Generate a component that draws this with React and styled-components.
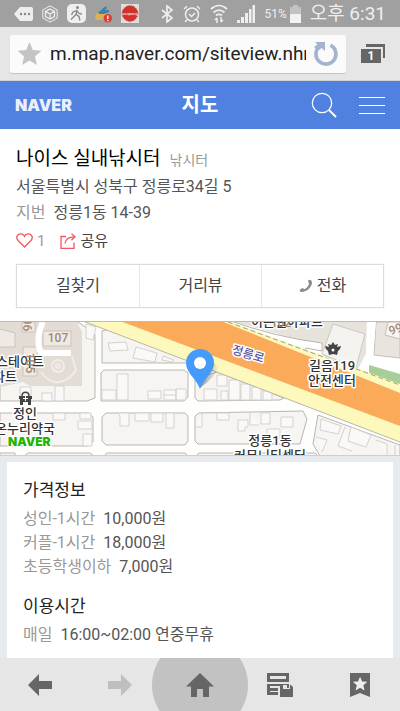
import React from 'react'
import styled, { createGlobalStyle, css } from 'styled-components'

const colors = {
  blue: '#5080e0',
  chrome: '#e6e6e6',
  icon: '#666',
  red: '#f9545f',
  line: '#dcdcdc',
}

const GlobalStyle = createGlobalStyle`
  * {
    box-sizing: border-box;
  }

  body {
    margin: 0;
    font-family: Roboto, 'Noto Sans CJK KR', sans-serif;
    font-size: 16px;
    line-height: 24px;
    color: #555;
    background: #e7ebef;
  }

  button {
    font: inherit;
    color: inherit;
    padding: 0;
    border: 0;
    background: none;
  }

  a {
    color: inherit;
    text-decoration: none;
  }

  svg {
    display: block;
    flex-shrink: 0;
  }
`

const Screen = styled.div`
  display: flex;
  flex-direction: column;
  height: 100vh;
`

const StatusBar = styled.div`
  display: flex;
  flex-shrink: 0;
  align-items: center;
  justify-content: space-between;
  height: 27px;
  padding: 0 14px;
  background: #a0a0a0;
  color: #eee;
`

const StatusGroup = styled.div`
  display: flex;
  align-items: center;
  gap: 9px;
`

const Battery = styled.span`
  display: flex;
  align-items: center;
  gap: 3px;
  font-size: 12px;
`

const Clock = styled.time`
  font-size: 19px;
  white-space: nowrap;
`

const AddressBar = styled.form`
  display: flex;
  flex-shrink: 0;
  align-items: center;
  height: 54px;
  padding: 0 15px 0 10px;
  gap: 15px;
  background: ${colors.chrome};
  border-bottom: 1px solid #d2d2d2;
`

const AddressField = styled.div`
  display: flex;
  flex: 1;
  min-width: 0;
  align-items: center;
  height: 38px;
  padding: 0 7px;
  background: #fbfbfb;
  border-radius: 2px;
  box-shadow: 0 1px 1px #c4c4c4;
`

const AddressInput = styled.input`
  flex: 1;
  min-width: 0;
  height: 32px;
  margin: 0 7px 0 8px;
  padding: 0;
  border: 0;
  outline: 0;
  background: none;
  color: #222;
  font: 19px Roboto, sans-serif;
`

const Content = styled.main`
  display: flex;
  flex: 1;
  flex-direction: column;
  min-height: 0;
  overflow-y: auto;
  scrollbar-width: none;
`

const Header = styled.header`
  display: grid;
  grid-template-columns: 1fr auto 1fr;
  flex-shrink: 0;
  align-items: center;
  height: 48px;
  padding: 0 15px;
  background: ${colors.blue};
  color: #fff;
`

const Logo = styled.a`
  font-family: Inter, sans-serif;
  font-size: 16px;
  font-weight: 900;
  color: #eaf0ff;
`

const HeaderTitle = styled.h1`
  margin: 0;
  font-size: 20px;
  font-weight: 700;
`

const HeaderActions = styled.div`
  display: flex;
  align-items: center;
  justify-content: flex-end;
  gap: 22px;
`

const Place = styled.section`
  flex-shrink: 0;
  padding: 18px 16px 13px;
  background: #fff;
`

const PlaceName = styled.h2`
  display: flex;
  align-items: baseline;
  gap: 9px;
  margin: 0 0 2px;
  font-size: 19px;
  font-weight: 400;
  color: #000;

  small {
    font-size: 14px;
    color: #999;
  }
`

const Line = styled.p`
  margin: 0;
  line-height: 26px;
`

const Muted = styled.span`
  margin-right: 8px;
  color: #999;
`

const Social = styled.div`
  display: flex;
  align-items: center;
  gap: 15px;
  height: 29px;
  margin-bottom: 9px;
`

const SocialButton = styled.button`
  display: flex;
  align-items: center;
  gap: 4px;
  font-size: 15px;
  color: ${props => (props.$muted ? '#999' : '#444')};
`

const Actions = styled.div`
  display: grid;
  grid-template-columns: repeat(3, 1fr);
  height: 44px;
  border: 1px solid ${colors.line};
  box-shadow: 0 0 1px ${colors.line};
`

const Action = styled.button`
  display: flex;
  align-items: center;
  justify-content: center;
  gap: 4px;
  color: #444;

  & + & {
    border-left: 1px solid #e6e6e6;
  }
`

const MapFrame = styled.section`
  flex-shrink: 0;
  height: 134px;
  border-top: 1px solid #bbb;
  background: #fff;

  svg {
    width: 100%;
    height: 100%;
  }
`

const Details = styled.div`
  display: flex;
  flex: 1 0 auto;
  padding: 6px 7px 0;
  border-top: 1px solid #ccd0d4;
  background: #e7ebef;
`

const Card = styled.div`
  flex: 1;
  padding: 16px 16px 10px;
  background: #fff;
`

const Group = styled.section`
  & + & {
    margin-top: 15px;
  }
`

const GroupTitle = styled.h3`
  margin: 0 0 5px;
  font-size: 17px;
  font-weight: 400;
  color: #222;
`

const Row = styled.p`
  margin: 0;
`

const BottomBar = styled.nav`
  display: grid;
  grid-template-columns: repeat(5, minmax(0, 1fr));
  grid-template-rows: 53px;
  flex-shrink: 0;
  height: 53px;
  overflow: hidden;
  background: ${colors.chrome};
`

const BottomButton = styled.button`
  display: flex;
  align-items: center;
  justify-content: center;
  color: ${props => (props.disabled ? '#bfbfbf' : colors.icon)};

  ${props =>
    props.$active &&
    css`
      height: 96px;
      width: 96px;
      align-self: center;
      justify-self: center;
      border-radius: 50%;
      background: #c2c2c2;
    `}
`

const STAR = '12,1 15.2,8.6 23.5,9.3 17.2,14.8 19.1,23 12,18.6 4.9,23 6.8,14.8 .5,9.3 8.8,8.6'

const StatusIcons = () => (
  <StatusGroup>
    <svg width="19" height="16" viewBox="0 0 19 16">
      <path d="M0 8 6 1h11a2 2 0 0 1 2 2v10a2 2 0 0 1-2 2H6z" fill="#eee" />
      <g fill="#888">
        <circle cx="7" cy="8" r="1.2" />
        <circle cx="11" cy="8" r="1.2" />
        <circle cx="15" cy="8" r="1.2" />
      </g>
    </svg>
    <svg width="16" height="18" viewBox="0 0 16 18" fill="none" stroke="#eee">
      <path d="m8 .8 7.2 4.1v8.2L8 17.2.8 13.1V4.9z" />
      <path d="m8 4 4.5 2.4v5.2L8 14l-4.5-2.4V6.4zM3.5 6.4 8 9l4.5-2.6M8 9v5" strokeWidth="1.3" />
    </svg>
    <svg width="19" height="19" viewBox="0 0 19 19">
      <rect width="19" height="19" rx="5" fill="#eee" />
      <circle cx="10.5" cy="3.600" r="1.500" fill="#888" />
      <path d="M10 6 9 10.500 6.500 13 4 15.500M9 10.500l3 2 1 4M9.500 6.500 6 8l-1.500 3M10 7l2 2.500 3 .5" fill="none" stroke="#888" strokeWidth="1.300" />
    </svg>
    <svg width="17" height="18" viewBox="0 0 17 18">
      <path d="M1 9c3-2 8-2 12 0l1 6H0z" fill="#dcb056" />
      <path d="M3 7c2-1 3-1 4-3l4-3 1 2-2 2h4v2l-5 2H4z" fill="#3c82ac" />
      <circle cx="12.8" cy="13.3" r="4.2" fill="#de3d33" />
      <path d="M12.8 10.5v3.4M12.8 15v1.2" stroke="#fff" strokeWidth="1.3" />
    </svg>
    <svg width="18" height="19" viewBox="0 0 18 19">
      <path d="M0 0h18v19H0z" fill="#ddd" />
      <circle cx="9" cy="9.5" r="7.8" fill="#d0322c" stroke="#d0322c" strokeDasharray="1.5 1" />
      <text x="9" y="11" fontSize="4" fill="#fff" textAnchor="middle">coupang</text>
    </svg>
  </StatusGroup>
)

const SystemIcons = () => (
  <StatusGroup>
    <svg width="13" height="18" viewBox="0 0 13 18" fill="none" stroke="#eee" strokeWidth="1.7">
      <path d="m1 5 10 8-5 4V1l5 4L1 13" />
    </svg>
    <svg width="18" height="18" viewBox="0 0 18 18" fill="none" stroke="#eee" strokeWidth="1.5">
      <circle cx="9" cy="9.5" r="6.5" />
      <path d="m6 9 2.5 2.5L12 8M1 4l3-2.7M17 4l-3-2.7M4 15l-2 2M14 15l2 2" />
    </svg>
    <svg width="18" height="20" viewBox="0 0 18 20" fill="none" stroke="#eee" strokeWidth="1.8">
      <path d="M1 5c5-4.500 11-4.500 16 0M3.500 8.500c3.500-3 7.500-3 11 0M6 11.500c2-1.500 4-1.500 6 0" />
      <path d="M7 19v-5m-2 2 2-2M11 13v5m2-2-2 2" strokeWidth="1.5" />
    </svg>
    <svg width="18" height="18" viewBox="0 0 18 18" fill="#eee">
      <path d="M0 15h3v3H0zM4 12h3v6H4zM8 8h3v10H8zM12 4h2.500v14H12zM15.500 0H18v18h-2.500z" />
    </svg>
    <Battery>
      51%
      <svg width="11" height="18" viewBox="0 0 11 18">
        <path d="M3 0h5v2h3v7H0V2h3z" fill="#c2c2c2" />
        <path d="M0 9h11v9H0z" fill="#f2f2f2" />
      </svg>
    </Battery>
    <Clock>오후 6:31</Clock>
  </StatusGroup>
)

const plots = [
  // apartment side
  'M0 0H78L95 12V76L87 79H0Z',
  'M102 9 110 7 190 36V41H102Z',
  'M101 51 104 48H184L188 51V75L184 79H101Z',
  'M0 91H88L93 95V120L88 124H0Z',
  'M102 95 106 91H185L188 94V119L185 123H106L102 119Z',
  'M195 57 217 50 284 76 280 78 198 79 195 76Z',
  'M195 94 199 91 303 89 307 97 300 122H198L195 119Z',
  'M318 93 400 123V134H320L313 122Z',
  'M0 131H15V138H0ZM24 134 28 131H90L94 134ZM104 134 107 131H185L188 134ZM196 134 199 131H315L318 134Z',
]

const houses = [
  'M108 21 126 20 128 28 110 29ZM136 25 157 31 155 40 133 36ZM163 34 174 38 172 40 162 38Z',
  'M117 52h11v26h-11zM102 68h14v10h-14zM148 69h13v8h-13zM164 68h12v10h-12zM176 67h10v11h-10zM164 73h12',
  'M42 71h10v8H42zM55 64h9v15h-9zM20 65h11v14H20zM86 2 96 5 93 18 86 16z',
  'M118 91h11v13h-9v-10zM135 91h14v8h-14zM151 91h12v9h-12zM166 91h8v15h-8zM53 91h12v7H53zM78 99h14v8H78zM83 112h9v12h-9zM80 91h11v6H80z',
  'M204 67h13v11h-13zM221 69h7v9h-7zM229 58h11v20h-11zM241 62h9v16h-9zM252 65h9v13h-9zM263 69h9v9h-9zM217 53h10v11h-10z',
  'M202 91v14h-6M217 91h12v7h-12zM238 98h10v7h-3v4h-7zM261 91h9v11h-9zM281 95h12v10h-12zM267 107h13v9h-13zM250 91v12h9',
  'M321 97 341 104 338 112 320 108ZM351 105 371 113 366 125 348 119ZM345 105 338 124 352 129M376 118 387 122V133M316 115 327 118 322 130M395 123V134',
]

const mapLabel = {
  fontSize: 13,
  fontWeight: 500,
  fill: '#333',
  stroke: '#fff',
  strokeWidth: 3,
  strokeLinejoin: 'round',
  paintOrder: 'stroke',
  textAnchor: 'middle',
}

const StreetMap = () => (
  <svg viewBox="0 0 400 133" preserveAspectRatio="xMidYMid slice" role="img" aria-label="정릉로 지도">
    <defs>
      <linearGradient id="pinShadow">
        <stop offset="0" stopColor="#555" stopOpacity=".6" />
        <stop offset="1" stopColor="#555" stopOpacity="0" />
      </linearGradient>
    </defs>
    <path d="M0 0H400V134H0Z" fill="#fefefd" />
    <g fill="#f6f5f2" stroke="#bbb5b1">
      {plots.map(d => <path key={d} d={d} />)}
    </g>
    <path d="M0 0H77L82 10V64H30L23 60 0 65Z" fill="#e3dcd5" />
    <path d="M0 7 15 11V25H0M43 9H71V24H43ZM23 25H37V54H23ZM22 0H35V10H22Z" fill="#efe9e3" stroke="#cdc3ba" />
    <path d="M43 0Q37 12 39 25Q39 31 45 31H71" fill="none" stroke="#fff" strokeWidth="6" />
    <g fill="none" stroke="#f1ece7" strokeWidth="2">
      <circle cx="58" cy="44" r="6" />
      <circle cx="58" cy="44" r="2" />
      <path d="M41 50Q50 62 60 60T76 48L72 34" />
    </g>
    <g fill="#faf9f7" stroke="#d5d1cd">
      {houses.map(d => <path key={d} d={d} />)}
    </g>

    <path d="M235 0H367L366 31 357 50 323 38V24Z" fill="#e7e2dc" />
    <path d="M333 2 365 12 356 46 322 32Z" fill="#f5f3ef" stroke="#cdc8c3" />
    <path d="M228 -2Q275 15 322 21V29L306 26 301 31 228 4Z" fill="#fff" stroke="#b9b3ae" />
    <path d="M376 0H400V36L374 33Z" fill="#e9e4dd" stroke="#c5bfb9" />
    <path d="M388 0 385 13 400 17V0Z" fill="#f7f5f2" stroke="#c5bfb9" />
    <path d="M367 0H376L373 34 400 39V49L369 42V54L357 48 366 35Z" fill="#fff" />
    <path d="M369 43 400 52V63L369 55Z" fill="#a8ce98" />
    <path d="M83 -1H228L400 62V120Z" fill="#fdf9bc" />
    <path d="M120 -1H221L400 71V104Z" fill="#faaa59" />
    <path d="M228 0 400 63" stroke="#a39d81" strokeDasharray="5 3" />
    <path d="M83 -1 400 120" stroke="#bbb5a5" />

    <g {...mapLabel}>
      <text x="20" y="44">스테이트</text>
      <text x="5" y="59">파트</text>
      <text x="25" y="96">정인</text>
      <text x="25" y="111">온누리약국</text>
      <text x="287" y="4">이든빌아파트</text>
      <text x="332" y="48">길음119</text>
      <text x="332" y="63">안전센터</text>
      <text x="270" y="123">정릉1동</text>
      <text x="270" y="138">커뮤니티센터</text>
      <text fontSize="12" fill="#5c58a0" transform="translate(247 36) rotate(17)">정릉로</text>
    </g>
    <g fontSize="12" fill="#a18b73" textAnchor="middle" fontWeight="500">
      <text x="58" y="20">107</text>
      <text x="281" y="5">102</text>
      <text transform="translate(23 -1) rotate(90)">106</text>
      <text transform="translate(26 41) rotate(90)">105</text>
      <text transform="translate(397 11) rotate(-20)">99</text>
    </g>
    <g fill="#444">
      <path d="M19 74h13v3h-1v6h-3v-3h-5v3h-3v-6h-1z" />
      <path d="M22 74c0-5 7-5 7 0" fill="none" stroke="#444" strokeWidth="1.500" />
      <path d="M25.500 74v5M23 76.500h5" stroke="#fff" />
      <path d="m333 20 2 3 3-1-1 3 4-1-1 3-2 2-1 4-4-1-4 1-1-4-2-2-1-3 4 1-1-3 3 1z" />
      <circle cx="333" cy="28" r="1.500" fill="#fff" />
    </g>

    <path d="M200 66 213 40 219 45Q216 54 200 66Z" fill="url(#pinShadow)" />
    <path d="M200 67C196 56 186 51 186 41a14 14 0 0 1 28 0C214 51 204 56 200 67Z" fill="#459bf9" />
    <circle cx="200" cy="41" r="6" fill="#fff" />
    <text x="8" y="124" fontFamily="Inter, sans-serif" fontSize="12" fontWeight="900" fill="#1eb500" stroke="#fff" strokeWidth="2" paintOrder="stroke">NAVER</text>
  </svg>
)

const info = [
  {
    title: '가격정보',
    rows: [
      ['성인-1시간', '10,000원'],
      ['커플-1시간', '18,000원'],
      ['초등학생이하', '7,000원'],
    ],
  },
  {
    title: '이용시간',
    rows: [['매일', '16:00~02:00 연중무휴']],
  },
]

const App = () => (
  <Screen>
    <GlobalStyle />
    <StatusBar>
      <StatusIcons />
      <SystemIcons />
    </StatusBar>

    <AddressBar>
      <AddressField>
        <button type="button" aria-label="Bookmark">
          <svg width="25" height="25" viewBox="0 0 24 24" fill="#c4c4c4">
            <polygon points={STAR} />
          </svg>
        </button>
        <AddressInput aria-label="Address" defaultValue="m.map.naver.com/siteview.nhn" />
        <button type="button" aria-label="Reload">
          <svg width="26" height="26" viewBox="0 0 26 26">
            <path d="M17.500 4.200a10 10 0 1 1-11.300 1.500" fill="none" stroke="#a5b3cf" strokeWidth="3.600" />
            <path d="M2 1h10v9l-3.300-3L5 9.500 1 6l3.500-2.500z" fill="#a5b3cf" />
          </svg>
        </button>
      </AddressField>
      <button type="button" aria-label="Tabs">
        <svg width="24" height="20" viewBox="0 0 24 20" fill={colors.icon}>
          <path d="M5 0h19v14h-2V3H5zM0 5h20v14H0z" />
          <text x="10" y="16" fontSize="12" fontWeight="700" fill="#fff" textAnchor="middle">1</text>
        </svg>
      </button>
    </AddressBar>

    <Content>
      <Header>
        <Logo href="#naver">NAVER</Logo>
        <HeaderTitle>지도</HeaderTitle>
        <HeaderActions>
          <button type="button" aria-label="검색">
            <svg width="26" height="26" viewBox="0 0 26 26" fill="none" stroke="#fff">
              <circle cx="11" cy="11" r="9.700" strokeWidth="1.200" />
              <path d="m18 18 7 7" strokeWidth="2" />
            </svg>
          </button>
          <button type="button" aria-label="메뉴">
            <svg width="26" height="18" viewBox="0 0 26 18" stroke="#fff">
              <path d="M0 1.500h26M0 9.500h26M0 17.500h26" />
            </svg>
          </button>
        </HeaderActions>
      </Header>

      <Place>
        <PlaceName>
          나이스 실내낚시터 <small>낚시터</small>
        </PlaceName>
        <Line>서울특별시 성북구 정릉로34길 5</Line>
        <Line>
          <Muted>지번</Muted>정릉1동 14-39
        </Line>
        <Social>
          <SocialButton $muted>
            <svg width="17" height="15" viewBox="0 0 17 15" fill="none" stroke={colors.red} strokeWidth="1.300">
              <path d="M8.500 14 2 7.500C-1 4 2 .8 4.500.8 6.500.8 8 2 8.500 3.300 9 2 10.500.8 12.500.8 15 .8 18 4 15 7.500z" />
            </svg>
            1
          </SocialButton>
          <SocialButton>
            <svg width="16" height="16" viewBox="0 0 16 16" fill="none" stroke={colors.red} strokeWidth="1.300">
              <path d="M6 3.500H1v11.800h13V9.500M5 10.500C5.500 6 9 3.800 14.500 3.800M11.500.8l3.500 3-3.500 3.400" />
            </svg>
            공유
          </SocialButton>
        </Social>
        <Actions>
          <Action>길찾기</Action>
          <Action>거리뷰</Action>
          <Action>
            <svg width="14" height="14" viewBox="0 0 14 14" fill="#8c8c8c">
              <path d="M9 1.500 10.500.8Q13 1 13 4C12.500 9 7 13 2.500 13 1 13 .2 12 1 10.500L3.500 9l2 1.300C7.500 9.300 9 7.500 10 5.300z" />
            </svg>
            전화
          </Action>
        </Actions>
      </Place>

      <MapFrame>
        <StreetMap />
      </MapFrame>

      <Details>
        <Card>
          {info.map(({ title, rows }) => (
            <Group key={title}>
              <GroupTitle>{title}</GroupTitle>
              {rows.map(([label, value]) => (
                <Row key={label}>
                  <Muted>{label}</Muted>
                  {value}
                </Row>
              ))}
            </Group>
          ))}
        </Card>
      </Details>
    </Content>

    <BottomBar>
      <BottomButton aria-label="Back">
        <svg width="24" height="22" viewBox="0 0 24 22" fill="currentColor">
          <path d="M0 11 11 0v7h13v8H11v7z" />
        </svg>
      </BottomButton>
      <BottomButton aria-label="Forward" disabled>
        <svg width="24" height="22" viewBox="0 0 24 22" fill="currentColor">
          <path d="M24 11 13 0v7H0v8h13v7z" />
        </svg>
      </BottomButton>
      <BottomButton aria-label="Home" $active>
        <svg width="28" height="24" viewBox="0 0 28 24" fill="currentColor">
          <path d="M14 0 28 13.500h-5V24h-6v-8h-6v8H5V13.500H0z" />
        </svg>
      </BottomButton>
      <BottomButton aria-label="Saved pages">
        <svg width="26" height="24" viewBox="0 0 26 24" fill="currentColor">
          <path fillRule="evenodd" d="M0 0h22v9H0zM3 3v3h16V3z" />
          <path d="M0 11h22v1h-9v1H3v2h8v3H3v1h8v3H0z" />
          <path fillRule="evenodd" d="M13 12h11l2 2v10H13zM16 12v4h7v-4zM20 12h2v3h-2z" />
        </svg>
      </BottomButton>
      <BottomButton aria-label="Bookmarks">
        <svg width="20" height="24" viewBox="0 0 20 24" fill="currentColor">
          <path d="M0 0h20v24l-10-4-10 4z" />
          <g transform="translate(2.500 3) scale(.63)">
            <polygon points={STAR} fill="#f0f0f0" />
          </g>
        </svg>
      </BottomButton>
    </BottomBar>
  </Screen>
)

export default App
